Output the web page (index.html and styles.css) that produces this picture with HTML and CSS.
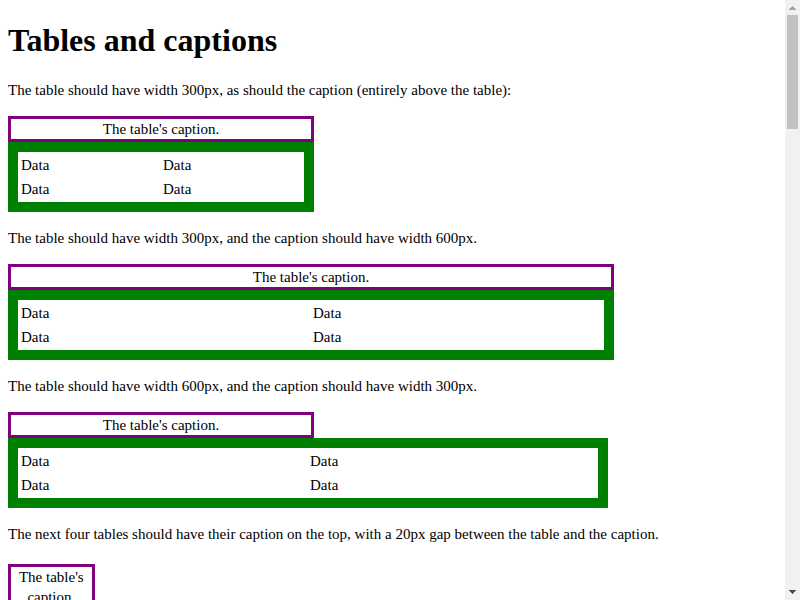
FILE: index.html
```html
<!DOCTYPE html>
<html lang="en">
<head>
<meta charset="utf-8">
<title>Tables and captions</title>
<link rel="stylesheet" href="styles.css">
</head>
<body>
<main class="page">
<h1>Tables and captions</h1>
<p>The table should have width 300px, as should the caption (entirely above the table):</p>
<table class="w300">
<caption class="c300">The table's caption.</caption>
<tr><td>Data</td><td>Data</td></tr>
<tr><td>Data</td><td>Data</td></tr>
</table>
<p>The table should have width 300px, and the caption should have width 600px.</p>
<table class="w300">
<caption class="c600">The table's caption.</caption>
<tr><td>Data</td><td>Data</td></tr>
<tr><td>Data</td><td>Data</td></tr>
</table>
<p>The table should have width 600px, and the caption should have width 300px.</p>
<table class="w600">
<caption class="c300">The table's caption.</caption>
<tr><td>Data</td><td>Data</td></tr>
<tr><td>Data</td><td>Data</td></tr>
</table>
<p>The next four tables should have their caption on the top, with a 20px gap between the table and the caption.</p>
<table class="spaced">
<caption class="gap">The table's caption.</caption>
<tr><td>Data</td><td>Data</td></tr>
</table>
</main>
<div class="scrollbar" aria-hidden="true">
<svg class="arrow up" viewBox="0 0 15 15" shape-rendering="crispEdges"><path d="M7 6h1v1h1v1h1v1h1v1H4V9h1V8h1V7h1z"/></svg>
<div class="track"><div class="thumb"></div></div>
<svg class="arrow down" viewBox="0 0 15 15" shape-rendering="crispEdges"><path d="M4 5h7v1h-1v1H9v1H8v1H7V8H6V7H5V6H4z"/></svg>
</div>
</body>
</html>
```

FILE: styles.css
```css
body {
  box-sizing: border-box;
  display: flex;
  height: 100vh;
  margin: 0;
  overflow: hidden;
  background: #fff;
  color: #000;
  font-family: "Liberation Serif", serif;
  font-size: 15px;
  line-height: 20px;
}

.page {
  flex: 1;
  min-width: 0;
  padding: 8px;
}

h1 {
  margin: 14px 0 21px;
  font-size: 32px;
  line-height: 37px;
}

p { margin: 16px 0; }

table { border: 10px solid green; }
caption { border: 3px solid purple; }
.w300 { width: 300px; }
.w600 { width: 600px; }
.c300 { width: 300px; }
.c600 { width: 600px; }
.spaced { margin-top: 20px; }
.gap { margin-bottom: 20px; }

.scrollbar {
  display: flex;
  flex-direction: column;
  width: 15px;
  background: #f1f1f1;
}

.arrow { width: 15px; height: 15px; }
.up { fill: #a3a3a3; }
.down { fill: #505050; }
.track { flex: 1; }

.thumb {
  height: 20%;
  margin: 0 2px;
  background: #c1c1c1;
}
```
